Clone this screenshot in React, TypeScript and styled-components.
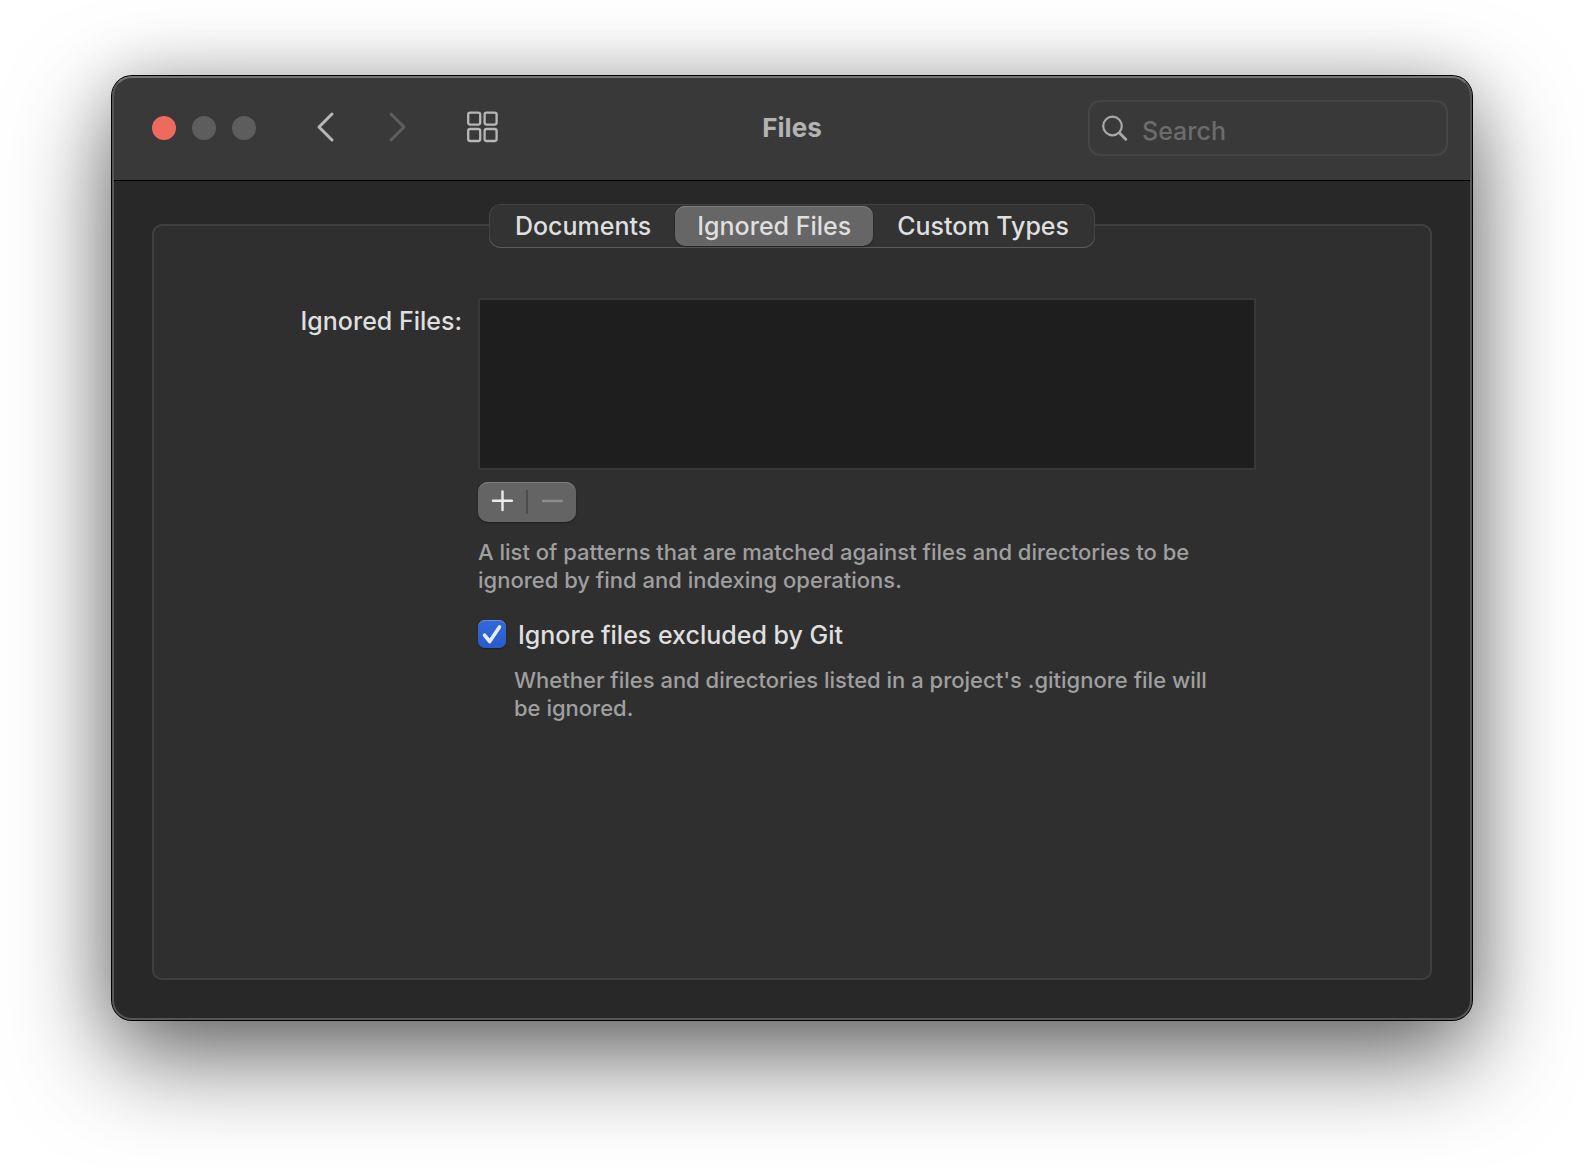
import React, { useState } from "react";
import styled, { createGlobalStyle, css } from "styled-components";

const GlobalStyle = createGlobalStyle`
  *, *::before, *::after { box-sizing: border-box; }
  body {
    margin: 0;
    background: #ffffff;
    color: #dfdfdf;
    font-family: Inter, "Liberation Sans", sans-serif;
    font-size: 25px;
    font-weight: 500;
    line-height: 32px;
  }
  button, input, select { font: inherit; color: inherit; }
`;

const Desktop = styled.div`
  display: flex;
  min-height: 100vh;
  padding: 76px 112px 148px;
  overflow: hidden;
`;

const Window = styled.main`
  position: relative;
  display: flex;
  flex: 1;
  flex-direction: column;
  min-width: 0;
  border-radius: 20px;
  background: #282828;
  box-shadow: 0 0 0 1px #000000, 0 36px 100px rgba(0, 0, 0, 0.6), 0 0 60px rgba(0, 0, 0, 0.15);

  &::after {
    content: "";
    position: absolute;
    inset: 0;
    border: 2px solid #565656;
    border-top-color: #757575;
    border-radius: 20px;
    pointer-events: none;
  }
`;

const Toolbar = styled.header`
  display: grid;
  grid-template-columns: 1fr auto 1fr;
  align-items: center;
  height: 105px;
  padding: 0 24px;
  border-bottom: 1px solid #000000;
  border-radius: 20px 20px 0 0;
  background: #393939;
`;

const ToolbarStart = styled.div`
  display: flex;
  align-items: center;
  padding-left: 16px;
`;

const TrafficLights = styled.div`
  display: flex;
  gap: 16px;
  margin-right: 53px;
`;

const Light = styled.button<{ $color: string }>`
  width: 24px;
  height: 24px;
  padding: 0;
  border: 0;
  border-radius: 50%;
  background: ${({ $color }) => $color};
`;

const IconButton = styled.button`
  display: grid;
  place-items: center;
  width: 34px;
  height: 34px;
  padding: 0;
  border: 0;
  background: none;
  color: #b7b7b7;

  &:disabled { color: #5e5e5e; }
`;

const Navigation = styled.nav`
  display: flex;
  gap: 37px;
  margin-right: 51px;
`;

const Title = styled.h1`
  margin: 0;
  color: #b3b3b3;
  font-size: 26px;
  font-weight: 700;
  line-height: 32px;
`;

const SearchField = styled.label`
  display: flex;
  align-items: center;
  justify-self: end;
  gap: 14px;
  width: 360px;
  height: 56px;
  padding: 0 12px;
  border: 2px solid #454545;
  border-radius: 12px;
  color: #a8a8a8;

  svg { flex: none; }
`;

const SearchInput = styled.input`
  flex: 1;
  min-width: 0;
  padding: 6px 0 0;
  border: 0;
  outline: 0;
  background: none;

  &::placeholder { color: #6c6c6c; opacity: 1; }
`;

const Content = styled.div`
  display: flex;
  flex: 1;
  padding: 43px 40px 40px;
`;

const Panel = styled.section`
  display: flex;
  flex: 1;
  flex-direction: column;
  border: 2px solid #404040;
  border-radius: 10px;
  background: #2f2f2f;
`;

const Tabs = styled.div`
  display: flex;
  align-self: center;
  gap: 2px;
  height: 44px;
  margin-top: -22px;
  padding: 2px 4px;
  border-radius: 12px;
  background: #333333;
  box-shadow: inset 0 -1px 0 #5c5c5c, inset 0 0 0 1px #434343;
`;

const Tab = styled.button<{ $selected: boolean }>`
  height: 40px;
  padding: 0 22px;
  border: 0;
  border-radius: 10px;
  background: none;
  line-height: 38px;

  ${({ $selected }) =>
    $selected &&
    css`
      background: #666666;
      box-shadow: inset 0 1px 0 #7f7f7f, 0 1px 2px rgba(0, 0, 0, 0.4);
    `}
`;

const Form = styled.div`
  display: grid;
  grid-template-columns: 308px 1fr;
  gap: 16px;
  margin-top: 50px;
  padding-right: 174px;
`;

const FieldLabel = styled.label`
  padding-top: 7px;
  text-align: right;
`;

const Fields = styled.div`
  display: flex;
  flex-direction: column;
  align-items: flex-start;
`;

const PatternList = styled.select`
  width: 100%;
  height: 172px;
  border: 2px solid #383838;
  border-radius: 0;
  outline: 0;
  background: #1e1e1e;
`;

const ListActions = styled.div`
  display: flex;
  align-items: center;
  height: 40px;
  margin-top: 12px;
  border-radius: 10px;
  background: #646464;
  box-shadow: inset 0 1px 0 #808080, 0 1px 2px rgba(0, 0, 0, 0.4);
`;

const ListAction = styled.button`
  display: grid;
  place-items: center;
  width: 48px;
  height: 40px;
  padding: 0 0 3px;
  border: 0;
  background: none;
  color: #ececec;

  &:disabled { color: #8c8c8c; }
`;

const Separator = styled.span`
  width: 2px;
  height: 24px;
  background: #4d4d4d;
`;

const Hint = styled.p<{ $nested?: boolean }>`
  max-width: 736px;
  margin: ${({ $nested }) => ($nested ? "16px 0 0" : "16px 0 0")};
  padding-left: ${({ $nested }) => ($nested ? "36px" : "0")};
  color: #9f9f9f;
  font-size: 22px;
  line-height: 28px;
`;

const CheckRow = styled.label`
  display: flex;
  align-items: center;
  gap: 12px;
  margin-top: 24px;
`;

const CheckText = styled.span`
  padding-top: 2px;
  line-height: 30px;
`;

const CheckMark = styled.span`
  display: grid;
  width: 28px;
  height: 28px;

  > * { grid-area: 1 / 1; }
  svg { pointer-events: none; }
`;

const Checkbox = styled.input`
  appearance: none;
  width: 28px;
  height: 28px;
  margin: 0;
  border-radius: 7px;
  background: #646464;
  box-shadow: inset 0 1px 0 rgba(255, 255, 255, 0.25), 0 1px 2px rgba(0, 0, 0, 0.4);

  &:checked { background: linear-gradient(#3468dc, #2a5bc9); }
  &:not(:checked) + svg { visibility: hidden; }
`;

const TAB_NAMES = ["Documents", "Ignored Files", "Custom Types"];

export default function App() {
  const [selectedTab, setSelectedTab] = useState("Ignored Files");

  return (
    <>
      <GlobalStyle />
      <Desktop>
        <Window>
          <Toolbar>
            <ToolbarStart>
              <TrafficLights>
                <Light $color="#ed6a5e" aria-label="Close" />
                <Light $color="#5d5d5d" aria-label="Minimize" />
                <Light $color="#5d5d5d" aria-label="Zoom" />
              </TrafficLights>
              <Navigation>
                <IconButton aria-label="Back">
                  <svg width="34" height="34" fill="none" stroke="currentColor" strokeWidth="3" strokeLinecap="round" strokeLinejoin="round">
                    <path d="M23 3 10 16 23 29" />
                  </svg>
                </IconButton>
                <IconButton aria-label="Forward" disabled>
                  <svg width="34" height="34" fill="none" stroke="currentColor" strokeWidth="3" strokeLinecap="round" strokeLinejoin="round">
                    <path d="M11 3 24 16 11 29" />
                  </svg>
                </IconButton>
              </Navigation>
              <IconButton aria-label="Show all">
                <svg width="34" height="34" fill="none" stroke="currentColor" strokeWidth="2.3">
                  <rect x="3.2" y="1.6" width="12" height="12" rx="2" />
                  <rect x="19.6" y="1.6" width="12" height="12" rx="2" />
                  <rect x="3.2" y="18" width="12" height="12" rx="2" />
                  <rect x="19.6" y="18" width="12" height="12" rx="2" />
                </svg>
              </IconButton>
            </ToolbarStart>
            <Title>Files</Title>
            <SearchField>
              <svg width="26" height="26" fill="none" stroke="currentColor" strokeLinecap="round">
                <circle cx="10.5" cy="11" r="9.3" strokeWidth="2.2" />
                <path d="m17.5 18 6.2 6.2" strokeWidth="3" />
              </svg>
              <SearchInput type="text" placeholder="Search" aria-label="Search" />
            </SearchField>
          </Toolbar>
          <Content>
            <Panel>
              <Tabs role="tablist">
                {TAB_NAMES.map((name) => (
                  <Tab
                    key={name}
                    role="tab"
                    aria-selected={name === selectedTab}
                    $selected={name === selectedTab}
                    onClick={() => setSelectedTab(name)}
                  >
                    {name}
                  </Tab>
                ))}
              </Tabs>
              <Form>
                <FieldLabel htmlFor="patterns">Ignored Files:</FieldLabel>
                <Fields>
                  <PatternList id="patterns" multiple />
                  <ListActions>
                    <ListAction aria-label="Add pattern">
                      <svg width="22" height="22" fill="none" stroke="currentColor" strokeWidth="2.4" strokeLinecap="round">
                        <path d="M11.5 1.5v18.5M2 10.7h19" />
                      </svg>
                    </ListAction>
                    <Separator />
                    <ListAction aria-label="Remove pattern" disabled>
                      <svg width="22" height="22" fill="none" stroke="currentColor" strokeWidth="2.4" strokeLinecap="round">
                        <path d="M2 11h19" />
                      </svg>
                    </ListAction>
                  </ListActions>
                  <Hint>
                    A list of patterns that are matched against files and directories to be ignored by find and
                    indexing operations.
                  </Hint>
                  <CheckRow>
                    <CheckMark>
                      <Checkbox type="checkbox" defaultChecked />
                      <svg width="28" height="28" fill="none" stroke="#e6ecfa" strokeWidth="3.6" strokeLinecap="round" strokeLinejoin="round">
                        <path d="m6.5 15.2 5.2 6.3L21.5 7" />
                      </svg>
                    </CheckMark>
                    <CheckText>Ignore files excluded by Git</CheckText>
                  </CheckRow>
                  <Hint $nested>
                    Whether files and directories listed in a project's .gitignore file will be ignored.
                  </Hint>
                </Fields>
              </Form>
            </Panel>
          </Content>
        </Window>
      </Desktop>
    </>
  );
}
